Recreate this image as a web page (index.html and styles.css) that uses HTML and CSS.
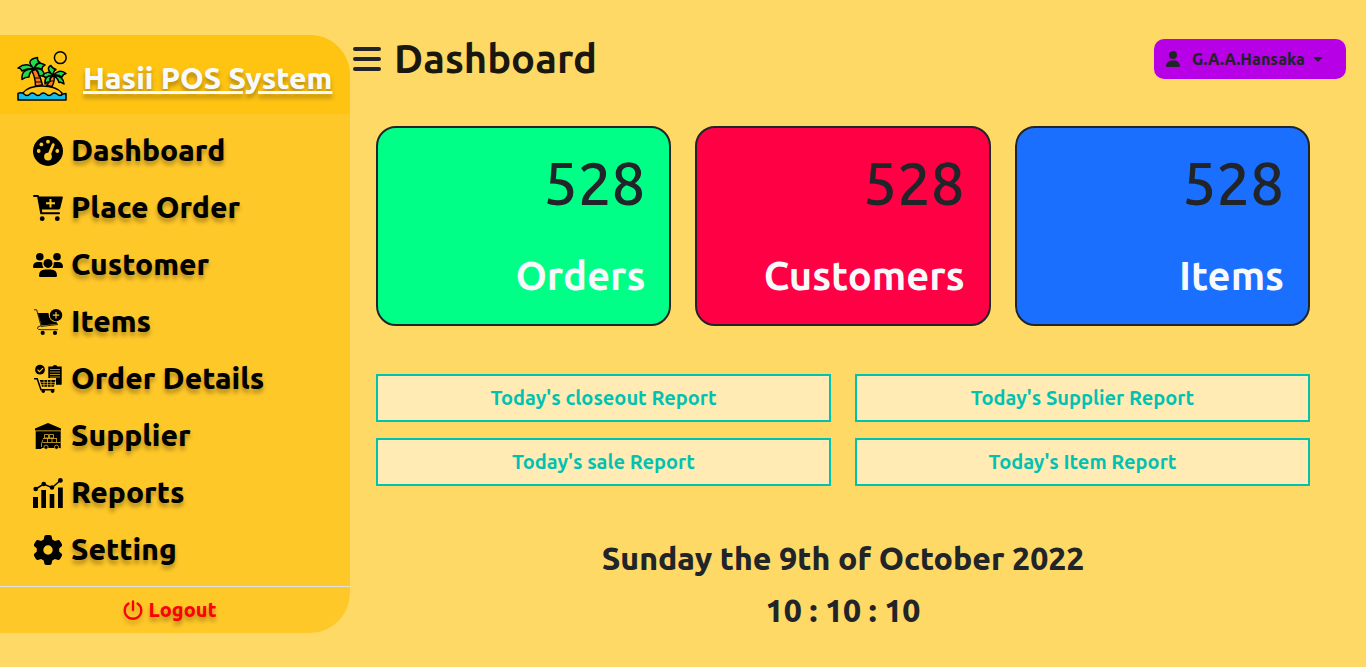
FILE: index.html
```html
<!DOCTYPE html>
<html lang="en">
<head>
<meta charset="utf-8">
<meta name="viewport" content="width=device-width, initial-scale=1">
<title>Hasii POS System</title>
<link rel="stylesheet" href="styles.css">
</head>
<body>
<div class="layout">
  <aside class="sidebar">
    <a class="brand" href="#">
      <svg class="brand-logo" viewBox="0 0 50 50" aria-hidden="true">
        <g stroke="#000" stroke-width="1.5" stroke-linejoin="round" stroke-linecap="round">
          <circle cx="43.3" cy="6.700" r="5.900" fill="none"/>
          <path d="M15 20 Q18.500 27 18.500 35 L25.500 34 Q23.500 25 19 18 Z" fill="#ff7a1a"/>
          <path d="M34 25 Q33 31 29.500 34.500 L35 35.500 Q38 30 37 25 Z" fill="#ff7a1a"/>
          <path d="M18.500 27h4M19 31h5M33 30h3.500" fill="none" stroke-width="1.200"/>
          <path d="M6 42 Q11 35 25 35 Q39 35 45 42 L44 45 L7 45 Z" fill="#ffc312"/>
          <path d="M1 42.500 Q4 41 7 43 Q10 46 13 43 Q15 41 18 43 Q21 46 24 43 Q26 41 29 43 Q32 46 35 43 Q37 41 40 43 Q43 46 46 43 L49 42.500 V49 H1 Z" fill="#12bfe8"/>
          <path d="M17.500 18 Q10 10 1 17 Q4 17 5 20 Q11 17 17.500 18 Z" fill="#1fdc4a"/>
          <path d="M17.500 18 Q4 17 5 28.500 Q8 26 12 26 Q12 21 17.500 18 Z" fill="#1fdc4a"/>
          <path d="M17.500 18 Q7 9 20.500 6.500 Q20 10 23 11.500 Q18 13 17.500 18 Z" fill="#1fdc4a"/>
          <path d="M17.500 18 Q20 9 28 14 Q25 15 25 18.500 Q21 16 17.500 18 Z" fill="#1fdc4a"/>
          <path d="M17.500 18 Q27 16 27.500 26 Q25 23.500 22 25 Q21.500 19 17.500 18 Z" fill="#1fdc4a"/>
          <path d="M36 24.500 Q31 18 25 25 Q28 24.500 29 27 Q32 24 36 24.500 Z" fill="#1fdc4a"/>
          <path d="M36 24.500 Q27 24 28 33 Q30 30.500 33 30.500 Q32 27 36 24.500 Z" fill="#1fdc4a"/>
          <path d="M36 24.500 Q28 17 34 14.500 Q35 17.500 39 18.500 Q36 20 36 24.500 Z" fill="#1fdc4a"/>
          <path d="M36 24.500 Q43 17 49 22.500 Q46 23 45 26 Q41 23 36 24.500 Z" fill="#1fdc4a"/>
          <path d="M36 24.500 Q46 24 47 33 Q44 30.500 42 31.500 Q41 27 36 24.500 Z" fill="#1fdc4a"/>
        </g>
      </svg>
      <span class="brand-name">Hasii POS System</span>
    </a>
    <nav class="menu">
      <a class="menu-item" href="#">
        <svg class="menu-icon" viewBox="0 0 30 30" aria-hidden="true">
          <circle cx="15" cy="15" r="15"/>
          <g class="cut">
            <circle cx="15" cy="5.700" r="1.900"/><circle cx="8.400" cy="8.400" r="1.900"/><circle cx="5.700" cy="15" r="1.900"/><circle cx="24.300" cy="15" r="1.900"/>
            <circle cx="15" cy="20.600" r="3.900"/>
            <path d="M18.900 8 A1.500 1.500 0 0 1 21.700 9 L17.600 19.500 L14.500 18.500 Z"/>
          </g>
        </svg>
        <span>Dashboard</span>
      </a>
      <a class="menu-item" href="#">
        <svg class="menu-icon" viewBox="0 0 30 30" aria-hidden="true">
          <path d="M1 2 H5 Q6 2 6.200 3.500 H29 Q30 3.500 29.800 4.800 L27.300 14.900 Q27 16.400 25.500 16.400 H8.800 L9.300 19.200 H26 A1 1 0 0 1 26 21.300 H8.200 Q7.400 21.300 7.200 20.400 L4.200 4 H1 A1 1 0 0 1 1 2 Z"/>
          <circle cx="9.200" cy="25.700" r="2.400"/><circle cx="24.300" cy="25.700" r="2.400"/>
          <path class="cut" d="M16.500 6 h2 v3.200 h3.500 v2 h-3.500 v3.200 h-2 v-3.200 h-3.500 v-2 h3.500 Z"/>
        </svg>
        <span>Place Order</span>
      </a>
      <a class="menu-item" href="#">
        <svg class="menu-icon" viewBox="0 0 30 30" aria-hidden="true">
          <circle cx="6.800" cy="6.800" r="3.800"/><circle cx="24" cy="6.800" r="3.800"/><circle cx="15" cy="13.400" r="4.500"/>
          <path d="M0 17 Q0 12 5 12 H7.500 Q8.500 12 9.300 12.400 Q8.800 15.500 10.500 18 H1 Q0 18 0 17 Z"/>
          <path d="M30 17 Q30 12 25 12 H22.500 Q21.500 12 20.700 12.400 Q21.200 15.500 19.500 18 H29 Q30 18 30 17 Z"/>
          <path d="M6 25.800 Q6 19.500 12.200 19.500 H17.800 Q24 19.500 24 25.800 Q24 27 22.800 27 H7.200 Q6 27 6 25.800 Z"/>
        </svg>
        <span>Customer</span>
      </a>
      <a class="menu-item" href="#">
        <svg class="menu-icon" viewBox="0 0 30 30" aria-hidden="true">
          <path d="M4.800 6 H15.500 Q15.500 14.500 24 15.500 L24.500 17 L8.500 18.500 Z"/>
          <path d="M1 2.800 H3.700 L8 18.800 Q4 19.300 4.500 21.500 Q5 22.700 8 22.700 H25 M8 19.500 L25 17.500" fill="none" stroke="#000" stroke-width=".8"/>
          <circle cx="23" cy="8.200" r="6.200"/><circle cx="9.700" cy="25.900" r="2.100"/><circle cx="22" cy="25.900" r="2.100"/>
          <path d="M23 5 v6.400 M19.800 8.200 h6.400" class="cut-line"/>
        </svg>
        <span>Items</span>
      </a>
      <a class="menu-item" href="#">
        <svg class="menu-icon" viewBox="0 0 30 30" aria-hidden="true">
          <circle cx="7" cy="5.700" r="4.900"/>
          <path d="M4.500 5.700 l2 2 l3.500 -3.600" class="cut-line"/>
          <path d="M15.300 2.500 H19.500 Q20 1 22 1 Q24 1 24.500 2.500 H28.700 V20.700 H23 V14 H15.300 Z"/>
          <path d="M17 5.500 H27 M17 8 H27 M17 10.500 H27 M17 13 H27" class="cut-line hair"/>
          <path d="M1 14.700 H4.200 L8 25.800 H21.500" fill="none" stroke="#000" stroke-width="1.500"/>
          <path d="M6.800 16 H22.500 L20.800 22.800 H9 Z"/>
          <path d="M7.500 18.300 H22 M8 20.700 H21.500 M11 16 V23 M14.500 16 V23 M18 16 V23" class="cut-line hair"/>
          <circle cx="10.300" cy="27.200" r="1.700"/><circle cx="19.600" cy="27.200" r="1.700"/>
        </svg>
        <span>Order Details</span>
      </a>
      <a class="menu-item" href="#">
        <svg class="menu-icon" viewBox="0 0 30 30" aria-hidden="true">
          <path d="M15 2 L28 7.500 V9.500 H2 V7.500 Z M2.700 10.300 H27.700 V27.900 H2.700 Z"/>
          <path d="M11.500 13.500 h4 v3.500 h-4 Z M16.500 13.500 h4 v3.500 h-4 Z M10 17.500 h14 M8.500 26 V22.500 L10 18.500 M14.500 17.500 v4 M19 17.500 v4 M23.500 17.500 v4 M9.500 21.500 H27.700" class="cut-line hair"/>
          <path d="M8.500 27.500 H27.700" class="cut-line thin"/>
          <circle cx="13" cy="26.200" r="2.100" stroke="#ffc829" stroke-width=".7"/><circle cx="23.500" cy="26.200" r="2.100" stroke="#ffc829" stroke-width=".7"/>
        </svg>
        <span>Supplier</span>
      </a>
      <a class="menu-item" href="#">
        <svg class="menu-icon" viewBox="0 0 30 30" aria-hidden="true">
          <path d="M0 19 H5 V30 H0 Z M8.300 12 H13 V30 H8.300 Z M16.700 16 H21.300 V30 H16.700 Z M25 9.500 H29.800 V30 H25 Z"/>
          <path d="M2.700 11 L10.700 6 L19 9.700 L27.300 2.500" fill="none" stroke="#000" stroke-width="1.500"/>
          <circle cx="2.700" cy="11" r="2.300"/><circle cx="10.700" cy="6" r="2.300"/><circle cx="19" cy="9.500" r="2.300"/><circle cx="27.400" cy="2.400" r="2.400"/>
        </svg>
        <span>Reports</span>
      </a>
      <a class="menu-item" href="#">
        <svg class="menu-icon" viewBox="0 0 512 512" aria-hidden="true">
          <path d="M495.900 166.600c3.200 8.700 .5 18.400-6.400 24.600l-43.300 39.400c1.100 8.300 1.700 16.800 1.700 25.400s-.6 17.100-1.700 25.400l43.300 39.400c6.900 6.200 9.600 15.900 6.400 24.600c-4.400 11.900-9.700 23.300-15.800 34.300l-4.700 8.100c-6.600 11-14 21.400-22.100 31.200c-5.900 7.200-15.700 9.600-24.500 6.800l-55.700-17.700c-13.400 10.300-28.200 18.900-44 25.400l-12.500 57.100c-2 9.100-9 16.300-18.200 17.800c-13.800 2.300-28 3.500-42.500 3.500s-28.700-1.200-42.500-3.500c-9.200-1.500-16.200-8.700-18.200-17.800l-12.500-57.100c-15.800-6.500-30.600-15.100-44-25.400L83.100 425.900c-8.800 2.800-18.600 .3-24.500-6.800c-8.100-9.800-15.500-20.200-22.100-31.200l-4.700-8.100c-6.100-11-11.400-22.400-15.800-34.300c-3.200-8.700-.5-18.400 6.400-24.600l43.300-39.400C64.600 273.100 64 264.600 64 256s.6-17.100 1.700-25.400L22.400 191.200c-6.900-6.200-9.600-15.900-6.400-24.600c4.400-11.900 9.700-23.300 15.800-34.300l4.700-8.100c6.600-11 14-21.400 22.100-31.200c5.900-7.200 15.700-9.600 24.500-6.800l55.700 17.700c13.400-10.300 28.200-18.900 44-25.400l12.500-57.100c2-9.100 9-16.300 18.200-17.800C227.300 1.200 241.500 0 256 0s28.700 1.200 42.500 3.500c9.200 1.500 16.200 8.700 18.200 17.800l12.500 57.100c15.800 6.500 30.600 15.100 44 25.400l55.700-17.700c8.800-2.800 18.600-.3 24.500 6.800c8.100 9.800 15.500 20.200 22.100 31.200l4.700 8.100c6.100 11 11.400 22.400 15.800 34.300zM256 336a80 80 0 1 0 0-160 80 80 0 1 0 0 160z"/>
        </svg>
        <span>Setting</span>
      </a>
    </nav>
    <a class="logout" href="#">
      <svg class="logout-icon" viewBox="0 0 20 20" aria-hidden="true">
        <path d="M10 1.300 V10 M5.500 3.500 A8.300 8.300 0 1 0 14.500 3.500" fill="none" stroke="#f00" stroke-width="2.300" stroke-linecap="round"/>
      </svg>
      <span>Logout</span>
    </a>
  </aside>

  <main class="content">
    <header class="topbar">
      <button class="toggle" type="button" aria-label="Toggle menu">
        <svg class="toggle-icon" viewBox="0 0 28 24" aria-hidden="true"><path d="M2 2 H26 M2 12 H26 M2 22 H26" stroke="#212529" stroke-width="4" stroke-linecap="round"/></svg>
      </button>
      <h1 class="title">Dashboard</h1>
      <button class="user" type="button">
        <svg class="user-icon" viewBox="0 0 448 512" aria-hidden="true"><path d="M224 256A128 128 0 1 0 224 0a128 128 0 1 0 0 256zm-45.700 48C79.800 304 0 383.800 0 482.300C0 498.700 13.300 512 29.700 512H418.300c16.400 0 29.700-13.300 29.700-29.700C448 383.800 368.200 304 269.700 304H178.300z"/></svg>
        <span>G.A.A.Hansaka</span>
        <span class="caret"></span>
      </button>
    </header>

    <section class="cards">
      <article class="card orders"><p class="count">528</p><h2 class="label">Orders</h2></article>
      <article class="card customers"><p class="count">528</p><h2 class="label">Customers</h2></article>
      <article class="card items"><p class="count">528</p><h2 class="label">Items</h2></article>
    </section>

    <section class="reports">
      <button class="report" type="button">Today's closeout Report</button>
      <button class="report" type="button">Today's Supplier Report</button>
      <button class="report" type="button">Today's sale Report</button>
      <button class="report" type="button">Today's Item Report</button>
    </section>

    <section class="clock">
      <p>Sunday the 9th of October 2022</p>
      <p>10 : 10 : 10</p>
    </section>
  </main>
</div>
</body>
</html>
```
FILE: styles.css
```css
* {
  box-sizing: border-box;
}

body {
  margin: 0;
  background: #ffd966;
  color: #212529;
  font-family: Ubuntu, "Noto Sans", sans-serif;
}

h1, h2, p {
  margin: 0;
}

button {
  font-family: inherit;
  color: inherit;
}

a {
  color: inherit;
  text-decoration: none;
}

.layout {
  display: flex;
  align-items: flex-start;
  padding-top: 35px;
}

.sidebar {
  flex: 0 0 350px;
  overflow: hidden;
  border-radius: 0 40px 40px 0;
  background: #ffc829;
}

.brand {
  display: flex;
  align-items: center;
  gap: 16px;
  height: 79px;
  padding: 2px 17px 0;
  background: #ffc312;
}

.brand-logo {
  flex: none;
  width: 50px;
  height: 50px;
}

.brand-name {
  padding-top: 4px;
  color: #f8f9fa;
  font-size: 30px;
  font-weight: 800;
  line-height: 40px;
  white-space: nowrap;
  text-decoration: underline;
  text-decoration-thickness: 3px;
  text-shadow: 0 4px 4px rgba(0, 0, 0, 0.3);
}

.menu {
  display: flex;
  flex-direction: column;
  gap: 12px;
  padding: 14px 33px;
}

.menu-item {
  display: flex;
  align-items: center;
  gap: 8px;
  color: #000;
  font-size: 30px;
  font-weight: 800;
  line-height: 45px;
  text-shadow: 0 4px 4px rgba(0, 0, 0, 0.3);
}

.menu-icon {
  width: 30px;
  height: 30px;
}

.cut {
  fill: #ffc829;
}

.cut-line {
  fill: none;
  stroke: #ffc829;
  stroke-width: 1.2px;
}

.thin {
  stroke-width: 1px;
}

.hair {
  stroke-width: 0.7px;
}

.logout {
  display: flex;
  align-items: center;
  justify-content: center;
  gap: 5px;
  padding: 8px 10px 8px 0;
  border-top: 1px solid #dee2e6;
  color: #f00;
  font-size: 20px;
  font-weight: 800;
  line-height: 30px;
  text-shadow: 0 4px 4px rgba(0, 0, 0, 0.3);
}

.logout-icon {
  width: 20px;
  height: 20px;
  filter: drop-shadow(0 4px 2px rgba(0, 0, 0, 0.2));
}

.content {
  flex: 1;
  min-width: 0;
}

.topbar {
  display: flex;
  align-items: center;
  height: 48px;
  padding: 0 20px 0 3px;
}

.toggle {
  display: flex;
  padding: 0;
  border: 0;
  background: none;
}

.toggle-icon {
  width: 28px;
  height: 24px;
}

.title {
  margin-left: 13px;
  color: #1a180e;
  font-size: 40px;
  font-weight: 600;
  line-height: 48px;
}

.user {
  display: flex;
  align-items: center;
  width: 192px;
  height: 40px;
  margin-left: auto;
  padding: 0 12px;
  border: 0;
  border-radius: 10px;
  background: #b800e6;
  font-size: 16px;
  font-weight: 800;
}

.user-icon {
  width: 14px;
  height: 16px;
  margin-right: 12px;
  fill: #212529;
}

.caret {
  margin-left: 8px;
  border: 5px solid transparent;
  border-top-color: #212529;
  border-bottom: 0;
}

.cards {
  display: grid;
  grid-template-columns: repeat(3, 1fr);
  gap: 24px;
  padding: 43px 56px 0 26px;
}

.card {
  height: 200px;
  padding: 16px 24px;
  border: 2px solid #212529;
  border-radius: 20px;
  text-align: right;
}

.orders {
  background: #00ff87;
}

.customers {
  background: #ff0044;
}

.items {
  background: #1a6fff;
}

.count {
  font-size: 60px;
  font-weight: 500;
  line-height: 78px;
}

.label {
  margin-top: 24px;
  color: #f8f9fa;
  font-size: 40px;
  font-weight: 600;
  line-height: 60px;
}

.reports {
  display: grid;
  grid-template-columns: repeat(2, 1fr);
  gap: 16px 24px;
  padding: 48px 56px 0 26px;
}

.report {
  height: 48px;
  padding: 0 12px 2px;
  border: 2px solid #00c2b2;
  background: #ffebb3;
  color: #00c2b2;
  font-size: 20px;
  font-weight: 600;
}

.clock {
  display: grid;
  gap: 12px;
  padding: 52px 56px 16px 26px;
  font-size: 32px;
  font-weight: 800;
  line-height: 40px;
  text-align: center;
}
```
